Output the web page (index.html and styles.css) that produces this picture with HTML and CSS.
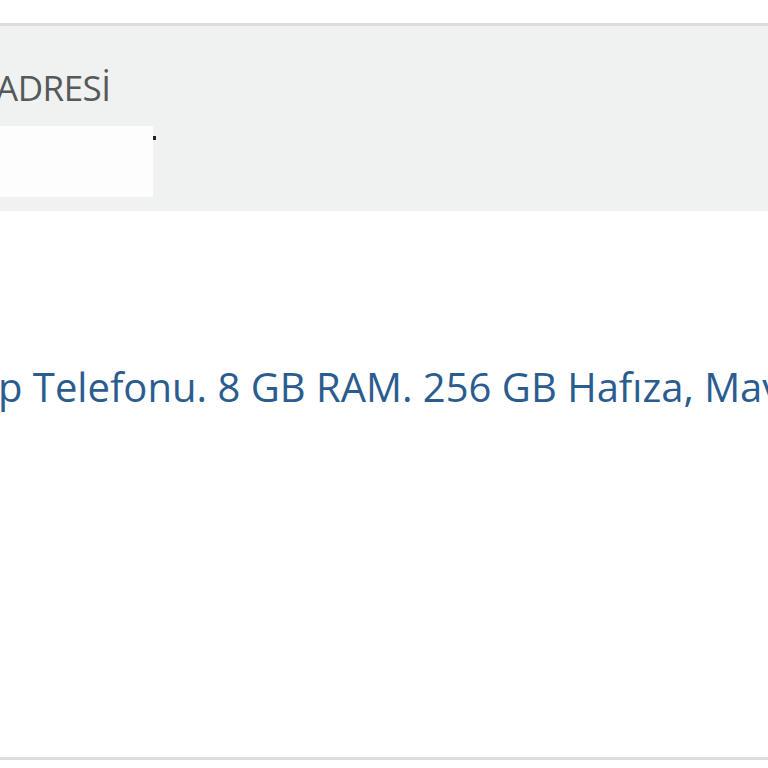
FILE: index.html
```html
<!DOCTYPE html>
<html lang="tr">
<head>
<meta charset="utf-8">
<link rel="stylesheet" href="styles.css">
</head>
<body>
<div class="page">
  <div class="order-box">
    <div class="order-header">
      <div class="label">ADRESİ</div>
      <div class="value-row">
        <div class="value-box"></div>
        <span class="dot"></span>
      </div>
    </div>
    <div class="order-body">
      <a class="product-link" href="#">p Telefonu. 8 GB RAM. 256 GB Hafıza, Mavi</a>
    </div>
  </div>
</div>
</body>
</html>
```
FILE: styles.css
```css
html, body {
  margin: 0;
  padding: 0;
  background: #ffffff;
}
.page {
  width: 768px;
  height: 768px;
  overflow: hidden;
  padding-top: 23px;
  box-sizing: border-box;
  font-family: "Open Sans", "Noto Sans", sans-serif;
}
.order-box {
  border-top: 3px solid #dcdede;
  border-bottom: 3px solid #dcdede;
  height: 737px;
  box-sizing: border-box;
  display: flex;
  flex-direction: column;
}
.order-header {
  background: #f0f1f1;
  height: 185px;
  display: flex;
  flex-direction: column;
  padding-top: 45px;
  box-sizing: border-box;
}
.label {
  font-size: 35px;
  line-height: 34px;
  color: #565959;
  margin-left: -4px;
  letter-spacing: -0.5px;
}
.value-row {
  display: flex;
  align-items: flex-start;
  margin-top: 21px;
}
.value-box {
  width: 153px;
  height: 71px;
  background: #fdfdfd;
}
.dot {
  width: 3px;
  height: 4px;
  background: #222;
  margin-top: 10px;
}
.order-body {
  flex: 1;
  padding-top: 154px;
}
.product-link {
  display: block;
  white-space: nowrap;
  font-size: 40px;
  line-height: 44px;
  color: #2b5c8f;
  text-decoration: none;
  margin-left: -2px;
}
```
